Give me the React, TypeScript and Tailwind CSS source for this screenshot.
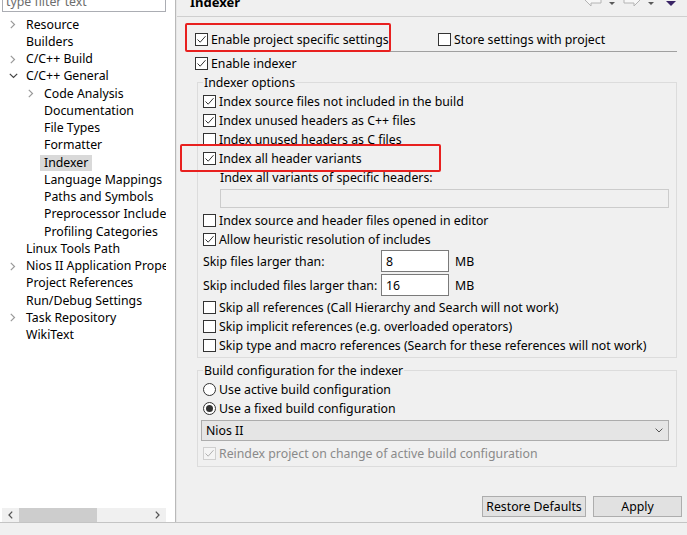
import React from "react";

type TreeItem = {
  label: string;
  level: number;
  chevron?: "right" | "down";
  selected?: boolean;
};

const TREE: TreeItem[] = [
  { label: "Resource", level: 0, chevron: "right" },
  { label: "Builders", level: 0 },
  { label: "C/C++ Build", level: 0, chevron: "right" },
  { label: "C/C++ General", level: 0, chevron: "down" },
  { label: "Code Analysis", level: 1, chevron: "right" },
  { label: "Documentation", level: 1 },
  { label: "File Types", level: 1 },
  { label: "Formatter", level: 1 },
  { label: "Indexer", level: 1, selected: true },
  { label: "Language Mappings", level: 1 },
  { label: "Paths and Symbols", level: 1 },
  { label: "Preprocessor Include Paths, Macros etc.", level: 1 },
  { label: "Profiling Categories", level: 1 },
  { label: "Linux Tools Path", level: 0 },
  { label: "Nios II Application Properties", level: 0, chevron: "right" },
  { label: "Project References", level: 0 },
  { label: "Run/Debug Settings", level: 0 },
  { label: "Task Repository", level: 0, chevron: "right" },
  { label: "WikiText", level: 0 },
];

function Chevron({ dir }: { dir?: "right" | "down" }) {
  if (!dir) return null;
  if (dir === "down") {
    return (
      <svg width="9" height="6" viewBox="0 0 9 6">
        <path d="M0.8 0.8 L4.5 4.5 L8.2 0.8" stroke="#444" strokeWidth="1.2" fill="none" />
      </svg>
    );
  }
  return (
    <svg width="6" height="9" viewBox="0 0 6 9">
      <path d="M0.8 0.8 L4.5 4.5 L0.8 8.2" stroke="#9a9a9a" strokeWidth="1.2" fill="none" />
    </svg>
  );
}

function Check({ checked, disabled }: { checked?: boolean; disabled?: boolean }) {
  return (
    <span
      className={`w-[13px] h-[13px] shrink-0 flex items-center justify-center border ${
        disabled ? "border-[#cfcfcf] bg-[#f4f4f4]" : "border-[#333333] bg-white"
      }`}
    >
      {checked && (
        <svg width="11" height="11" viewBox="0 0 11 11">
          <path
            d="M1.5 5.5 L4.2 8.2 L9.5 2.2"
            stroke={disabled ? "#b0b0b0" : "#333333"}
            strokeWidth="1"
            fill="none"
          />
        </svg>
      )}
    </span>
  );
}

function Radio({ checked }: { checked?: boolean }) {
  return (
    <span className="w-[13px] h-[13px] shrink-0 rounded-full border border-[#333333] bg-white flex items-center justify-center">
      {checked && <span className="w-[7px] h-[7px] rounded-full bg-[#333333]" />}
    </span>
  );
}

function CheckRow({
  label,
  checked,
  disabled,
  className = "",
}: {
  label: string;
  checked?: boolean;
  disabled?: boolean;
  className?: string;
}) {
  return (
    <div className={`flex items-center h-[19px] gap-[3px] whitespace-nowrap ${className}`}>
      <Check checked={checked} disabled={disabled} />
      <span className={disabled ? "text-[#8a8a8a]" : ""}>{label}</span>
    </div>
  );
}

function SizeRow({ label, value, className = "" }: { label: string; value: string; className?: string }) {
  return (
    <div className={`flex items-center h-[22px] whitespace-nowrap ${className}`}>
      <span className="w-[178px]">{label}</span>
      <div className="w-[68px] h-[22px] bg-white border border-[#7a7a7a] flex items-center pl-[4px]">
        {value}
      </div>
      <span className="ml-[6px]">MB</span>
    </div>
  );
}

export default function App() {
  return (
    <div className="relative w-[687px] h-[535px] overflow-hidden bg-[#f0f0f0] text-[12.3px] leading-[17px] text-black font-['Noto_Sans',sans-serif]">
      <div className="flex h-[522px]">
        {/* Left: preference tree */}
        <div className="w-[175px] bg-white flex flex-col">
          <div className="ml-[2px] w-[164px] h-[22px] -mt-[10px] border border-[#abadb3] pl-[3px] flex items-center text-[#6d6d6d] shrink-0">
            type filter text
          </div>
          <div className="w-[166px] flex-1 overflow-hidden pt-[4px]">
            {TREE.map((item) => (
              <div key={item.label} className="flex items-center h-[17.25px] whitespace-nowrap">
                <span style={{ width: 5 + item.level * 18 }} className="shrink-0" />
                <span className="w-[16px] shrink-0 flex items-center justify-center">
                  <Chevron dir={item.chevron} />
                </span>
                <span
                  className={`ml-[1px] px-[4px] leading-[16px] ${item.selected ? "bg-[#d9d9d9]" : ""}`}
                >
                  {item.label}
                </span>
              </div>
            ))}
          </div>
          <div className="ml-[2px] w-[164px] h-[14px] bg-[#f0f0f0] flex shrink-0">
            <div className="w-[17px] flex items-center justify-center">
              <svg width="5" height="8" viewBox="0 0 5 8">
                <path d="M4.2 0.6 L1 4 L4.2 7.4" stroke="#555" strokeWidth="1.3" fill="none" />
              </svg>
            </div>
            <div className="w-[78px] bg-[#cdcdcd]" />
            <div className="flex-1" />
            <div className="w-[17px] flex items-center justify-center">
              <svg width="5" height="8" viewBox="0 0 5 8">
                <path d="M0.8 0.6 L4 4 L0.8 7.4" stroke="#555" strokeWidth="1.3" fill="none" />
              </svg>
            </div>
          </div>
        </div>
        <div className="w-[1px] bg-[#b9b9b9]" />
        <div className="w-[1px] bg-[#e6e6e6]" />

        {/* Right: Indexer page */}
        <div className="flex-1 flex flex-col">
          <div className="h-[17px] border-b border-[#cfcfcf] flex justify-between items-start shrink-0">
            <div className="ml-[13px] -mt-[6px] text-[13px] leading-[16px] font-bold">Indexer</div>
            <svg width="100" height="12" viewBox="0 0 100 12" className="-mt-[5px] mr-[7px]">
              <path d="M5 5 L11 -1 L11 2 L21 2 L21 8 L11 8 L11 11 Z" fill="#f7f7f7" stroke="#b4b4b4" />
              <path d="M29 7 L35 7 L32 10 Z" fill="#5a5a5a" />
              <path d="M60 5 L54 -1 L54 2 L44 2 L44 8 L54 8 L54 11 Z" fill="#f7f7f7" stroke="#b4b4b4" />
              <path d="M68 7 L74 7 L71 10 Z" fill="#5a5a5a" />
              <path d="M86 6 L96 6 L91 11 Z" fill="#3a2566" />
            </svg>
          </div>

          <div className="pl-[18px] pr-[10px]">
            <div className="flex items-center mt-[12.5px]">
              <CheckRow label="Enable project specific settings" checked className="w-[243px]" />
              <CheckRow label="Store settings with project" />
            </div>
            <div className="mt-[2.5px] border-t border-[#a0a0a0]" />
            <CheckRow label="Enable indexer" checked className="mt-[1.5px]" />

            <fieldset className="ml-[2px] mt-[1px] border border-[#dcdcdc] px-[5px] pb-[2.5px]">
              <legend className="px-[1px] leading-[17px]">Indexer options</legend>
              <div className="pt-[1px]">
                <CheckRow label="Index source files not included in the build" checked />
                <CheckRow label="Index unused headers as C++ files" checked />
                <CheckRow label="Index unused headers as C files" />
                <CheckRow label="Index all header variants" checked />
                <div className="h-[19px] flex items-center pl-[17px]">Index all variants of specific headers:</div>
                <div className="mt-[2.5px] ml-[17px] w-[449px] h-[19px] border border-[#cccccc] bg-[#f0f0f0]" />
                <CheckRow label="Index source and header files opened in editor" className="mt-[2.5px]" />
                <CheckRow label="Allow heuristic resolution of includes" checked />
                <SizeRow label="Skip files larger than:" value="8" className="mt-[1.5px]" />
                <SizeRow label="Skip included files larger than:" value="16" className="mt-[2px]" />
                <CheckRow label="Skip all references (Call Hierarchy and Search will not work)" className="mt-[1.5px]" />
                <CheckRow label="Skip implicit references (e.g. overloaded operators)" />
                <CheckRow label="Skip type and macro references (Search for these references will not work)" />
              </div>
            </fieldset>

            <fieldset className="ml-[2px] mt-[3.5px] border border-[#dcdcdc] px-[5px] pb-[3.5px]">
              <legend className="px-[1px] leading-[17px]">Build configuration for the indexer</legend>
              <div className="pt-[1px]">
                <div className="flex items-center h-[19px] gap-[3px]">
                  <Radio />
                  <span>Use active build configuration</span>
                </div>
                <div className="flex items-center h-[19px] gap-[3px]">
                  <Radio checked />
                  <span>Use a fixed build configuration</span>
                </div>
                <div className="mt-[2.5px] -ml-[2px] w-[468px] h-[21px] bg-[#e5e5e5] border border-[#acacac] flex items-center justify-between pl-[4px] pr-[5px]">
                  <span>Nios II</span>
                  <svg width="8" height="5" viewBox="0 0 8 5">
                    <path d="M0.6 0.6 L4 4 L7.4 0.6" stroke="#555" strokeWidth="1" fill="none" />
                  </svg>
                </div>
                <CheckRow
                  label="Reindex project on change of active build configuration"
                  checked
                  disabled
                  className="mt-[2.5px]"
                />
              </div>
            </fieldset>
          </div>

          <div className="mt-auto flex justify-end gap-[7px] pr-[5px] pb-[5px]">
            <button className="w-[104px] h-[21px] bg-[#e1e1e1] border border-[#adadad] leading-[17px]">
              Restore Defaults
            </button>
            <button className="w-[89px] h-[21px] bg-[#e1e1e1] border border-[#adadad] leading-[17px]">
              Apply
            </button>
          </div>
        </div>
      </div>
      <div className="h-[1px] bg-[#c4c4c4]" />
      <div className="h-[12px] bg-[#f0f0f0]" />

      {/* red annotation frames */}
      <div className="absolute left-[185px] top-[23px] w-[206px] h-[29px] border-2 border-[#e8201f] rounded-[2px]" />
      <div className="absolute left-[180px] top-[144px] w-[261px] h-[28px] border-2 border-[#e8201f] rounded-[2px]" />
    </div>
  );
}
